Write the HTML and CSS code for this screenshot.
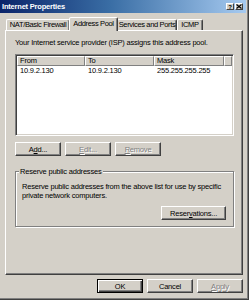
FILE: index.html
```html
<!DOCTYPE html>
<html lang="en">
<head>
    <meta charset="UTF-8">
    <title>Internet Properties</title>
    <link rel="stylesheet" href="styles.css">
</head>
<body>
    <div class="window">
        <div class="titlebar">
            <span class="title">Internet Properties</span>
            <span class="caption-buttons">
                <span class="caption-btn help">?</span>
                <span class="caption-btn close">
                    <svg width="6" height="5" viewBox="0 0 6 5"><path d="M0.5 0.5 L5.5 4.5 M5.5 0.5 L0.5 4.5" stroke="#000" stroke-width="1.2"/></svg>
                </span>
            </span>
        </div>

        <div class="dialog-body">
            <div class="tabs">
                <div class="tab tab-nat">NAT/Basic Firewall</div>
                <div class="tab tab-pool active">Address Pool</div>
                <div class="tab tab-services">Services and Ports</div>
                <div class="tab tab-icmp">ICMP</div>
            </div>

            <div class="panel">
                <p class="intro">Your Internet service provider (ISP) assigns this address pool.</p>

                <div class="listview">
                    <div class="list-head">
                        <span class="col col-from">From</span>
                        <span class="col col-to">To</span>
                        <span class="col col-mask">Mask</span>
                        <span class="col col-rest"></span>
                    </div>
                    <div class="list-row">
                        <span class="col col-from">10.9.2.130</span>
                        <span class="col col-to">10.9.2.130</span>
                        <span class="col col-mask">255.255.255.255</span>
                    </div>
                </div>

                <div class="button-row">
                    <button class="btn">A<u>d</u>d...</button>
                    <button class="btn" disabled><u>E</u>dit...</button>
                    <button class="btn" disabled><u>R</u>emove</button>
                </div>

                <div class="group">
                    <div class="group-title">Reserve public addresses</div>
                    <p class="group-text">Reserve public addresses from the above list for use by specific private network computers.</p>
                    <div class="group-actions">
                        <button class="btn btn-wide">Reser<u>v</u>ations...</button>
                    </div>
                </div>
            </div>

            <div class="footer">
                <button class="btn default">OK</button>
                <button class="btn">Cancel</button>
                <button class="btn" disabled><u>A</u>pply</button>
            </div>
        </div>
    </div>
</body>
</html>
```

FILE: styles.css
```css
body {
    margin: 0;
    background-color: #d4d0c8;
    font-family: "Liberation Sans", Arial, sans-serif;
    font-size: 7.5px;
    letter-spacing: -0.2px;
    color: #000;
}
.window {
    width: 249px;
    height: 300px;
    box-sizing: border-box;
    background-color: #d4d0c8;
    border-right: 1px solid #404040;
    border-bottom: 1px solid #404040;
    box-shadow: inset -1px -1px #808080;
    padding-right: 2px;
}
.titlebar {
    height: 13px;
    display: flex;
    align-items: center;
    justify-content: space-between;
    padding: 0 3px 0 2px;
    background: linear-gradient(to right, #0a246a, #3a6ea5 45%, #a6caf0);
    color: #fff;
}
.title {
    font-weight: bold;
    font-size: 7.5px;
    line-height: 13px;
}
.caption-buttons {
    display: flex;
    gap: 1px;
}
.caption-btn {
    width: 8px;
    height: 7px;
    box-sizing: border-box;
    display: flex;
    align-items: center;
    justify-content: center;
    background-color: #d4d0c8;
    border: 1px solid;
    border-color: #fff #404040 #404040 #fff;
    color: #000;
    font-size: 6px;
    font-weight: bold;
    line-height: 1;
}
.dialog-body {
    padding: 4px 0 0 5px;
}
.tabs {
    display: flex;
    align-items: flex-end;
    height: 13px;
    padding-left: 1px;
}
.tab {
    height: 11px;
    box-sizing: border-box;
    border: 1px solid;
    border-bottom: none;
    border-color: #fff #404040 transparent #fff;
    box-shadow: inset -1px 0 #808080;
    border-radius: 2px 2px 0 0;
    text-align: center;
    line-height: 10px;
    letter-spacing: -0.35px;
    white-space: nowrap;
    overflow: hidden;
}
.tab-nat { width: 64px; }
.tab-pool { width: 49px; }
.tab-services { width: 60px; }
.tab-icmp { width: 26px; }
.tab.active {
    height: 14px;
    margin-bottom: -1px;
    margin-left: -1px;
    margin-right: -1px;
    position: relative;
    z-index: 1;
    background-color: #d4d0c8;
    line-height: 11px;
}
.panel {
    width: 238px;
    height: 245px;
    box-sizing: border-box;
    border: 1px solid;
    border-color: #fff #404040 #404040 #fff;
    box-shadow: inset -1px -1px #808080;
    padding: 0 8px 0 9px;
}
.intro {
    margin: 7px 0 0 0;
    line-height: 10px;
}
.listview {
    margin-top: 6px;
    height: 82px;
    box-sizing: border-box;
    background-color: #fff;
    border: 1px solid;
    border-color: #808080 #fff #fff #808080;
    box-shadow: inset 1px 1px #404040, inset -1px -1px #d4d0c8;
    padding: 1px;
}
.list-head {
    display: flex;
    height: 10px;
}
.list-head .col {
    box-sizing: border-box;
    background-color: #d4d0c8;
    border: 1px solid;
    border-color: #fff #808080 #808080 #fff;
    line-height: 8px;
    padding-left: 2px;
}
.list-row {
    display: flex;
    line-height: 10px;
}
.list-row .col {
    padding-left: 3px;
    box-sizing: border-box;
}
.col-from { width: 68px; }
.col-to { width: 69px; }
.col-mask { width: 70px; }
.col-rest { flex: 1; }
.button-row {
    display: flex;
    gap: 4px;
    margin-top: 6px;
}
.btn {
    width: 46px;
    height: 14px;
    box-sizing: border-box;
    padding: 0;
    font-family: inherit;
    font-size: 7.5px;
    letter-spacing: -0.2px;
    color: #000;
    background-color: #d4d0c8;
    border: 1px solid;
    border-color: #fff #404040 #404040 #fff;
    box-shadow: inset -1px -1px #808080;
    border-radius: 0;
}
.btn:disabled {
    color: #808080;
    text-shadow: 1px 1px #fff;
}
.btn.default {
    border-color: #000;
    box-shadow: inset 1px 1px #fff, inset -1px -1px #404040, inset -2px -2px #808080;
}
.btn-wide {
    width: 65px;
}
.group {
    margin-top: 15px;
    height: 56px;
    box-sizing: border-box;
    border: 1px solid #808080;
    box-shadow: inset 1px 1px #fff, 1px 1px #fff;
    padding: 0 7px 0 6px;
}
.group-title {
    width: fit-content;
    margin: -5px 0 0 -3px;
    padding: 0 1px;
    line-height: 9px;
    background-color: #d4d0c8;
}
.group-text {
    margin: 6px 0 0 0;
    line-height: 9px;
}
.group-actions {
    display: flex;
    justify-content: flex-end;
    margin-top: 6px;
}
.footer {
    display: flex;
    justify-content: flex-end;
    gap: 4px;
    width: 238px;
    margin-top: 4px;
}
```
